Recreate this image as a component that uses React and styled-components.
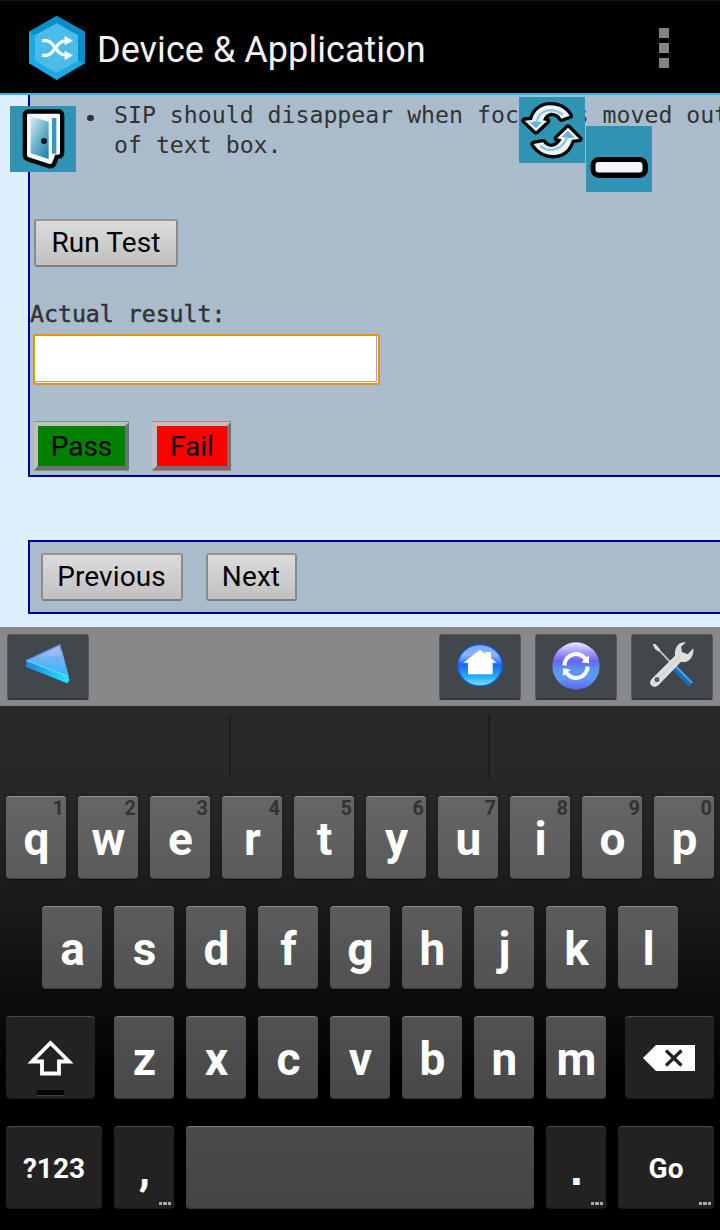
import React from "react";
import styled, { createGlobalStyle } from "styled-components";

const GlobalStyle = createGlobalStyle`
  * { box-sizing: border-box; }
  body { margin: 0; background: #000; }
`;

const Screen = styled.div`
  position: relative;
  display: flex;
  flex-direction: column;
  width: 720px;
  height: 1230px;
  overflow: hidden;
  font-family: Roboto, "Noto Sans", sans-serif;
`;

const ActionBar = styled.header`
  display: flex;
  flex: none;
  align-items: center;
  height: 95px;
  padding: 2px 51px 0 28.5px;
  background: #000;
  border-top: 1px solid #151515;
  border-bottom: 2px solid #33b5e5;
`;

const Title = styled.h1`
  flex: 1;
  margin: 3px 0 0 12.5px;
  color: #f3f3f3;
  font-size: 36px;
  font-weight: 400;
  letter-spacing: 0.05px;
  white-space: nowrap;
`;

const Overflow = styled.div`
  display: grid;
  gap: 5px;
  width: 10px;
`;

const OverflowDot = styled.i`
  width: 10px;
  height: 10px;
  background: #848484;
`;

const WebPage = styled.main`
  position: relative;
  flex: none;
  height: 532px;
  padding-left: 28px;
  background: #ddeeff;
  overflow: hidden;
`;

const TestPanel = styled.section`
  display: flex;
  flex-direction: column;
  align-items: flex-start;
  height: 382px;
  padding-top: 5px;
  background: #aabbcc;
  border-left: 2px solid #00008b;
  border-bottom: 2px solid #00008b;
`;

const Steps = styled.ul`
  margin: 0 0 59px;
  padding: 0 0 0 84px;
  list-style: none;
  color: #333;
  font: 23.2px/30px "DejaVu Sans Mono", monospace;
  white-space: nowrap;
`;

const Step = styled.li`
  position: relative;
  &::before {
    content: "";
    position: absolute;
    left: -27px;
    top: 14.5px;
    width: 6.5px;
    height: 6.5px;
    border-radius: 50%;
    background: #333;
  }
`;

const WebButton = styled.button`
  width: ${(p) => p.$width}px;
  height: 48px;
  padding: 0 0 1px;
  border: 2px solid;
  border-color: #959595 #8a8a8a #7e7e7e #8a8a8a;
  border-radius: 3px;
  background: linear-gradient(#dcdcdc, #c0c0c0);
  color: #000;
  font: 28px Roboto, sans-serif;
  letter-spacing: 0.1px;
  white-space: nowrap;
`;

const RunButton = styled(WebButton)`
  margin-left: 4px;
  padding-bottom: 2px;
`;

const ResultLabel = styled.label`
  margin-top: 32px;
  color: #333;
  font: 23.2px/30px "DejaVu Sans Mono", monospace;
  -webkit-text-stroke: 0.45px #333;
`;

const ResultInput = styled.input`
  width: 347px;
  height: 51px;
  margin: 5px 0 0 3px;
  padding: 0 8px;
  border: 2px solid #e59700;
  border-radius: 3px;
  outline: none;
  background: #fff;
  box-shadow: inset -1px -1px #eee, inset -2px -2px #aaa;
  font: 27px Roboto, sans-serif;
`;

const VerdictRow = styled.div`
  display: flex;
  gap: 23px;
  margin: 37px 0 0 4px;
`;

const VerdictButton = styled.button`
  width: ${(p) => p.$width}px;
  height: 48px;
  padding: 1px 0 0;
  border: 4px solid;
  border-color: #c0c0c0 #707070 #707070 #c0c0c0;
  border-left-width: ${(p) => p.$left || 4}px;
  border-radius: 1px;
  background: ${(p) => p.$color};
  background-clip: padding-box;
  box-shadow: 0 -1px ${(p) => p.$color}66, 0 1px ${(p) => p.$color}66;
  color: #000;
  font: 28px Roboto, sans-serif;
`;

const NavPanel = styled.nav`
  display: flex;
  gap: 23px;
  height: 74px;
  margin-top: 63px;
  padding: 11px 0 0 10.5px;
  background: #aabbcc;
  border: 2px solid #00008b;
  border-right: 0;
`;

const FloatingTile = styled.button`
  position: absolute;
  left: ${(p) => p.$x}px;
  top: ${(p) => p.$y}px;
  width: 66px;
  height: 66px;
  padding: 0;
  border: 0;
  background: #2f93b3;
  svg { display: block; filter: blur(0.7px); }
`;

const Toolbar = styled.div`
  display: flex;
  flex: none;
  align-items: flex-start;
  gap: 14px;
  height: 79px;
  padding: 7px 7px 0;
  background: #888;
`;

const ToolButton = styled.button`
  width: 82px;
  height: 66px;
  padding: 0;
  border: 1px solid #55595b;
  border-bottom: 2px solid #34383a;
  border-radius: 3px;
  background: #41474a;
  margin-right: ${(p) => (p.$pushRest ? "auto" : "0")};
  svg { display: block; filter: blur(0.5px); }
`;

const Keyboard = styled.section`
  flex: none;
  height: 524px;
  background: linear-gradient(#292929 0, #272727 84px, #191919 200px, #0c0c0c 300px, #000 375px);
`;

const Suggestions = styled.div`
  display: grid;
  grid-template-columns: 231px 259px 1fr;
  height: 90px;
  padding: 9px 0 17px;
`;

const Suggestion = styled.div`
  border-right: 2px solid #1e1e1e;
  &:last-child { border: 0; }
`;

const KeyRow = styled.div`
  display: flex;
  justify-content: center;
  gap: 12px;
  height: 83px;
  margin-bottom: 27px;
  &:last-child { margin-bottom: 0; }
`;

const tones = [
  "#666, #5a5a5a",
  "#5c5c5c, #515151",
  "#525252, #484848",
  "#4b4b4b, #444",
];

const Key = styled.button`
  position: relative;
  display: flex;
  justify-content: center;
  align-items: center;
  width: ${(p) => p.$width || 60}px;
  height: 83px;
  margin: 0 ${(p) => p.$right || 0}px 0 ${(p) => p.$left || 0}px;
  padding: ${(p) => (p.$icon ? "0 1px 0 0" : p.$size ? "1px 0 0" : "2px 0 0 1px")};
  border: 0;
  border-radius: 4px;
  background: ${(p) => (p.$dark ? "#222" : `linear-gradient(${tones[p.$row]})`)};
  box-shadow: inset 0 2px 1px -1px rgba(255, 255, 255, ${(p) => (p.$dark ? 0.2 : 0.3)}),
    inset 0 -2px 1px -1px rgba(0, 0, 0, 0.25), 0 1px 1px #0008;
  color: #fff;
  font: 700 ${(p) => p.$size || 46}px ${(p) => (p.$square ? '"Liberation Sans"' : "Roboto")}, sans-serif;
`;

const Hint = styled.span`
  position: absolute;
  top: 0;
  right: 2px;
  color: #333;
  font-size: 20px;
  line-height: 24px;
`;

const More = styled.span`
  position: absolute;
  right: 3px;
  bottom: 4px;
  display: flex;
  gap: 1px;
  i { width: 3.5px; height: 3px; background: #aaa; }
`;

const ShiftLight = styled.span`
  position: absolute;
  left: 31px;
  bottom: 3px;
  width: 27px;
  height: 6px;
  background: #000;
  border-bottom: 1px solid #444;
`;

const HexIcon = () => (
  <svg width="56" height="64" viewBox="87 48 168 192">
    <path d="M170 48 255 95V190L170 240 87 190V95Z" fill="#1ba9e3" />
    <path d="M87 95 170 48 255 95V190L234 182V106L170 70 105 106Z" fill="#078ecb" />
    <path d="M170 70 234 106V182L170 218 105 182V106Z" fill="#4bbbea" />
    <g fill="none" stroke="#fff" strokeWidth="10">
      <path d="M126 122H139C164 122 166 166 199 166" />
      <path d="M126 166H139C164 166 166 122 199 122" />
    </g>
    <path d="M194 108 219 122 194 136ZM194 152 219 166 194 181Z" fill="#fff" />
  </svg>
);

const DoorIcon = () => (
  <svg width="66" height="66" viewBox="6 6 198 198">
    <defs>
      <linearGradient id="door" x1="0" y1="0" x2=".8" y2="1">
        <stop stopColor="#e0eff4" />
        <stop offset=".55" stopColor="#6ab1cc" />
        <stop offset="1" stopColor="#2389ad" />
      </linearGradient>
    </defs>
    <path d="M60 29H152Q156 29 156 34V147Q156 152 151 152H142L132 178Q128 182 122 179L62 160Q57 158 57 153V34Q57 29 60 29Z" fill="#f5f7f8" stroke="#000" strokeWidth="26" strokeLinejoin="round" />
    <path d="M60 29H152Q156 29 156 34V147Q156 152 151 152H142L132 178Q128 182 122 179L62 160Q57 158 57 153V34Q57 29 60 29Z" fill="#f5f7f8" />
    <path d="M68 37 122 53V165L68 148Z" fill="url(#door)" />
    <path d="M132 42H145V149H132Z" fill="#3798bb" />
    <circle cx="108" cy="111" r="9" fill="#08161c" />
  </svg>
);

const SwapIcon = () => (
  <svg width="66" height="66" viewBox="3 3 198 198">
    <g stroke="#050505" strokeWidth="20" strokeLinejoin="round" fill="#050505">
      <path d="M20 74 42 72C48 46 68 29 94 28C122 27 143 39 155 59L130 68C117 46 86 42 75 73L87 75 54 106Z" />
      <path d="M184 129 162 131C154 158 137 175 110 177C83 179 59 164 47 144L75 139C91 161 118 156 131 130L117 127 150 95Z" />
    </g>
    <g fill="#eef3f5">
      <path d="M20 74 42 72C48 46 68 29 94 28C122 27 143 39 155 59L130 68C117 46 86 42 75 73L87 75 54 106Z" />
      <path d="M184 129 162 131C154 158 137 175 110 177C83 179 59 164 47 144L75 139C91 161 118 156 131 130L117 127 150 95Z" />
    </g>
    <path d="M35 80 51 76 72 79 54 97ZM131 123 150 104 170 125 150 126Z" fill="#69b3ce" />
    <path d="M56 79C61 47 95 28 135 56M66 150C99 174 135 159 148 122" fill="none" stroke="#8cc8df" strokeWidth="7" />
  </svg>
);

const MinusIcon = () => (
  <svg width="66" height="66" viewBox="0 0 66 66">
    <rect x="4.5" y="31" width="57.5" height="21" rx="8.5" fill="#000" />
    <rect x="9.5" y="36" width="47" height="10.5" rx="3" fill="#f5f6fb" />
  </svg>
);

const BackIcon = () => (
  <svg width="80" height="63" viewBox="24 315 240 189">
    <defs>
      <linearGradient id="back" x1=".8" y1="0" x2=".6" y2="1">
        <stop stopColor="#abb0eb" />
        <stop offset=".55" stopColor="#66b4f4" />
        <stop offset="1" stopColor="#22b8fd" />
      </linearGradient>
      <linearGradient id="edge">
        <stop stopColor="#1987eb" />
        <stop offset="1" stopColor="#24e7ff" />
      </linearGradient>
    </defs>
    <path d="M78 390 181 342 208 451 202 460 78 411Z" fill="url(#edge)" />
    <path d="M81 391 180 344 206 438Z" fill="url(#back)" />
    <path d="M81 390 180 344 184 363" fill="none" stroke="#6173d1" strokeWidth="3" />
    <path d="M81 392 205 439" fill="none" stroke="#79ccff" strokeWidth="4" />
    <path d="M115 381 175 348 184 376Z" fill="#b8c7f6" opacity=".4" />
  </svg>
);

const HomeIcon = () => (
  <svg width="80" height="63" viewBox="60 75 240 189">
    <defs>
      <linearGradient id="orb" x1="0" y1="0" x2="0" y2="1">
        <stop stopColor="#7ba5ff" />
        <stop offset=".25" stopColor="#8fb6ff" />
        <stop offset=".5" stopColor="#1768ef" />
        <stop offset=".78" stopColor="#2aafff" />
        <stop offset="1" stopColor="#77eaff" />
      </linearGradient>
    </defs>
    <ellipse cx="180" cy="166" rx="67" ry="62" fill="url(#orb)" stroke="#1559df" strokeWidth="4" />
    <path d="M180 119 196 132V126H213V145L230 158H218V193H144V158H130Z" fill="#fff" />
  </svg>
);

const SyncIcon = () => (
  <svg width="80" height="63" viewBox="348 75 240 189">
    <defs>
      <linearGradient id="sync" x1="0" y1="0" x2="0" y2="1">
        <stop stopColor="#eeeaff" />
        <stop offset=".2" stopColor="#a69fff" />
        <stop offset=".4" stopColor="#6564f5" />
        <stop offset=".58" stopColor="#5b96e9" />
        <stop offset=".78" stopColor="#5f97ff" />
        <stop offset="1" stopColor="#6061ed" />
      </linearGradient>
    </defs>
    <circle cx="468" cy="168" r="71" fill="url(#sync)" />
    <g fill="none" stroke="#fff" strokeWidth="12">
      <path d="M433 166A35 35 0 0 1 499 151" />
      <path d="M503 170A35 35 0 0 1 437 185" />
    </g>
    <path d="M507 136V160L484 157ZM429 199V175L452 179Z" fill="#fff" />
  </svg>
);

const ToolsIcon = () => (
  <svg width="80" height="63" viewBox="636 75 240 189">
    <path d="M704 107 752 157" stroke="#c7c7c7" strokeWidth="5" />
    <path d="M698 103 706 102 720 118 716 125 705 117Z" fill="#ddd" />
    <path d="M763 172 813 223" stroke="#176ebb" strokeWidth="19" />
    <path d="M768 170 816 219" stroke="#51a9e9" strokeWidth="5" />
    <path d="M798 97C778 94 762 111 765 137L695 207C681 223 702 239 716 225L783 155C804 161 823 141 820 115L803 133 786 126 783 110Z" fill="#dedede" />
    <path d="M779 141 700 221" stroke="#c8c8c8" strokeWidth="3" />
    <circle cx="711" cy="209" r="5" fill="#777" stroke="#454a4c" strokeWidth="4" />
  </svg>
);

const ShiftIcon = () => (
  <svg width="47" height="36" viewBox="0.5 0 47 36">
    <path d="M24 3 42.5 21.5H32.5V33.5H15.5V21.5H5.5Z" fill="none" stroke="#fff" strokeWidth="3.8" />
  </svg>
);

const DeleteIcon = () => (
  <svg width="52" height="26" viewBox="0 0 52 26">
    <path d="M0 13 13 0H52V26H13Z" fill="#fff" />
    <path d="M23 5.5 38.5 20.5M38.5 5.5 23 20.5" stroke="#222" strokeWidth="3.2" />
  </svg>
);

const MoreDots = () => <More><i /><i /><i /></More>;

export default function App() {
  return (
    <Screen>
      <GlobalStyle />
      <ActionBar>
        <HexIcon />
        <Title>Device &amp; Application</Title>
        <Overflow><OverflowDot /><OverflowDot /><OverflowDot /></Overflow>
      </ActionBar>

      <WebPage>
        <TestPanel>
          <Steps>
            <Step>SIP should disappear when focus is moved out<br />of text box.</Step>
          </Steps>
          <RunButton $width={144}>Run Test</RunButton>
          <ResultLabel htmlFor="result">Actual result:</ResultLabel>
          <ResultInput id="result" />
          <VerdictRow>
            <VerdictButton $width={95} $color="#008000">Pass</VerdictButton>
            <VerdictButton $width={79} $left={5} $color="#ff0000">Fail</VerdictButton>
          </VerdictRow>
        </TestPanel>
        <NavPanel>
          <WebButton $width={142}>Previous</WebButton>
          <WebButton $width={91}>Next</WebButton>
        </NavPanel>
        <FloatingTile $x={10} $y={11} aria-label="Exit"><DoorIcon /></FloatingTile>
        <FloatingTile $x={519} $y={2} aria-label="Reload"><SwapIcon /></FloatingTile>
        <FloatingTile $x={586} $y={31} aria-label="Minimize"><MinusIcon /></FloatingTile>
      </WebPage>

      <Toolbar>
        <ToolButton $pushRest aria-label="Back"><BackIcon /></ToolButton>
        <ToolButton aria-label="Home"><HomeIcon /></ToolButton>
        <ToolButton aria-label="Refresh"><SyncIcon /></ToolButton>
        <ToolButton aria-label="Settings"><ToolsIcon /></ToolButton>
      </Toolbar>

      <Keyboard>
        <Suggestions><Suggestion /><Suggestion /><Suggestion /></Suggestions>
        <KeyRow>
          {[..."qwertyuiop"].map((c, i) => (
            <Key key={c} $row={0}>{c}<Hint>{(i + 1) % 10}</Hint></Key>
          ))}
        </KeyRow>
        <KeyRow>
          {[..."asdfghjkl"].map((c) => <Key key={c} $row={1}>{c}</Key>)}
        </KeyRow>
        <KeyRow>
          <Key $dark $icon $width={89} $right={7} aria-label="Shift"><ShiftIcon /><ShiftLight /></Key>
          {[..."zxcvbnm"].map((c) => <Key key={c} $row={2}>{c}</Key>)}
          <Key $dark $icon $width={89} $left={7} aria-label="Delete"><DeleteIcon /></Key>
        </KeyRow>
        <KeyRow>
          <Key $dark $width={96} $size={28}>?123</Key>
          <Key $dark>,<MoreDots /></Key>
          <Key $row={3} $width={348} aria-label="Space" />
          <Key $dark $square>.<MoreDots /></Key>
          <Key $dark $width={96} $size={28}>Go<MoreDots /></Key>
        </KeyRow>
      </Keyboard>
    </Screen>
  );
}
